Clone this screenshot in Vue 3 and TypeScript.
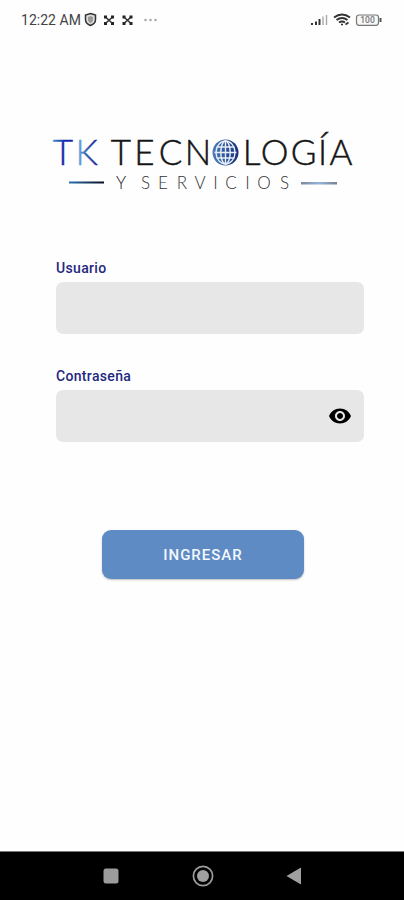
<script setup lang="ts">
import { ref } from 'vue'

const user = ref('')
const password = ref('')
const visible = ref(false)
</script>

<template>
  <main class="screen">
    <header class="status">
      <span class="time">12:22 AM</span>
      <svg class="left-icons" width="80" height="16" viewBox="0 0 80 16">
        <path d="M6.500 1.500 11.500 3V7.500c0 3-2.200 5-5 6C3.700 12.500 1.500 10.500 1.500 7.500V3Z" fill="#ddd" stroke="#333" stroke-width="1.500" />
        <path d="M6.500 4 9 5V7.500c0 1.700-1.200 3-2.500 3.700C5.200 10.500 4 9.200 4 7.500V5Z" fill="#999" />
        <g v-for="x in [20, 38.5]" :key="x" :transform="`translate(${x} 3.500)`" fill="#222">
          <path d="M0 0H3V3H0ZM7 0H10V3H7ZM0 6.500H3V9.500H0ZM7 6.500H10V9.500H7Z" />
          <path d="M2 2 8 7.500M8 2 2 7.500" stroke="#333" stroke-width="1.600" />
        </g>
        <g fill="#aaa"><circle cx="61.500" cy="8" r="1.300" /><circle cx="66.500" cy="8" r="1.300" /><circle cx="71.500" cy="8" r="1.300" /></g>
      </svg>
      <svg class="right-icons" width="76" height="16" viewBox="0 0 76 16">
        <g stroke-width="2" fill="none">
          <path d="M4 11V13M8 9.500V13M11.500 7V13" stroke="#333" />
          <path d="M15 4.500V13M18.500 3V13" stroke="#aaa" stroke-width="1.400" />
        </g>
        <g fill="none" stroke="#333" stroke-width="2">
          <path d="M26 5.500Q34 -.5 42 5.500M28.500 8Q34 4 39.500 8M31 10.500Q34 8.300 37 10.500" />
          <path d="M33 12.500h2M37.500 12.500l3-2" stroke-width="1.700" />
        </g>
        <rect x="48.500" y="3" width="22" height="10.300" rx="2.500" fill="#f7f7f7" stroke="#777" stroke-width="1.200" />
        <path d="M72.500 6v4" stroke="#555" stroke-width="2" />
        <text x="59.500" y="11.200" text-anchor="middle" class="battery">100</text>
      </svg>
    </header>

    <svg class="logo" width="308" height="72" viewBox="50 127 308 72">
      <defs>
        <linearGradient id="letterT" gradientUnits="userSpaceOnUse" x1="53" y1="140" x2="68" y2="148">
          <stop offset="0" stop-color="#3c93d2" /><stop offset=".65" stop-color="#1728aa" />
        </linearGradient>
        <linearGradient id="letterK" gradientUnits="userSpaceOnUse" x1="78" y1="0" x2="96" y2="0">
          <stop offset="0" stop-color="#76b0e2" /><stop offset=".45" stop-color="#3162ad" /><stop offset="1" stop-color="#20289b" />
        </linearGradient>
        <linearGradient id="ruleLeft"><stop offset="0" stop-color="#2a70b4" /><stop offset="1" stop-color="#080b1d" /></linearGradient>
        <linearGradient id="ruleRight"><stop offset="0" stop-color="#7d8998" /><stop offset=".5" stop-color="#94b3dc" /><stop offset="1" stop-color="#79828e" /></linearGradient>
        <linearGradient id="globe"><stop offset="0" stop-color="#4c7cb9" /><stop offset="1" stop-color="#172e75" /></linearGradient>
      </defs>
      <g class="name">
        <text x="63" y="165" fill="url(#letterT)" stroke="url(#letterT)">T</text>
        <text x="86.500" y="165" fill="url(#letterK)" stroke="url(#letterK)">K</text>
        <text x="121 144.500 170.500 198" y="165" fill="#151515" stroke="#151515">TECN</text>
        <text x="251.500 274.500 303.500 322.500 341" y="165" fill="#151515" stroke="#151515">LOGÍA</text>
      </g>
      <circle cx="225.500" cy="152.500" r="13" fill="url(#globe)" />
      <g fill="none" stroke="#e5eef9" stroke-width="1.400">
        <ellipse cx="225.500" cy="152.500" rx="9.500" ry="11.500" />
        <ellipse cx="225.500" cy="152.500" rx="4.700" ry="11.500" />
        <path d="M225.500 141V164M214.500 152.500H236.500M216.500 147H234.500M216.500 158H234.500" />
      </g>
      <path d="M69 181.500h35v2h-35z" fill="url(#ruleLeft)" />
      <path d="M301 182h36v2.500h-36z" fill="url(#ruleRight)" />
      <text class="tagline" x="121 133 145.500 163 182 200 215.500 231 247.500 264 284.500" y="189"><tspan fill="#151515">Y</tspan> SERVICIOS</text>
    </svg>

    <form class="form" @submit.prevent>
      <label class="label" for="user">Usuario</label>
      <div class="field"><input id="user" v-model="user" type="text" autocomplete="off"></div>
      <label class="label second" for="password">Contraseña</label>
      <div class="field">
        <input id="password" v-model="password" :type="visible ? 'text' : 'password'">
        <button class="eye" type="button" aria-label="Contraseña" @click="visible = !visible">
          <svg width="24" height="24" viewBox="0 0 24 24"><path d="M12 4.500C7 4.500 2.730 7.610 1 12c1.730 4.390 6 7.500 11 7.500s9.270-3.110 11-7.500c-1.730-4.390-6-7.500-11-7.500zM12 17c-2.760 0-5-2.240-5-5s2.240-5 5-5 5 2.240 5 5-2.240 5-5 5zm0-8c-1.660 0-3 1.340-3 3s1.340 3 3 3 3-1.340 3-3-1.340-3-3-3z" /></svg>
        </button>
      </div>
      <button class="submit" type="submit">INGRESAR</button>
    </form>

    <nav class="nav">
      <svg width="16" height="16"><rect x=".5" y=".5" width="15" height="15" rx="2.500" fill="#9c9c9c" /></svg>
      <svg width="22" height="22"><circle cx="11" cy="11" r="9.600" fill="none" stroke="#9c9c9c" stroke-width="1.700" /><circle cx="11" cy="11" r="6" fill="#a0a0a0" /></svg>
      <svg width="16" height="18"><path d="M.5 9 15 .5V17.500Z" fill="#a0a0a0" /></svg>
    </nav>
  </main>
</template>

<style>
body { background: #fff; }
</style>

<style scoped>
.screen { display: flex; flex-direction: column; width: 100%; height: 900px; background: #fefefe; font-family: Roboto, "Liberation Sans", sans-serif; }
.status { display: flex; align-items: center; height: 40px; padding: 0 20px 0 21px; box-sizing: border-box; }
.time { width: 62px; font-size: 14px; letter-spacing: .03px; color: #444; white-space: nowrap; }
.left-icons { margin-left: 1px; }
.right-icons { margin-left: auto; }
.battery { font: 500 8.500px Roboto, sans-serif; fill: #777; }
.logo { display: block; margin: 87px 0 0 50px; }
.name { font: 300 35px Lato, sans-serif; text-anchor: middle; stroke-width: .45px; }
.tagline { font: 300 17px Lato, sans-serif; text-anchor: middle; fill: #333; white-space: pre; }
.form { display: flex; flex-direction: column; margin: 60px 40px 0 56px; }
.label { height: 18px; margin-bottom: 5px; font-size: 14px; font-weight: 500; line-height: 18px; letter-spacing: .33px; color: #24277e; }
.second { margin-top: 33px; }
.field { display: flex; align-items: center; height: 52px; border-radius: 7px; background: #e7e7e7; }
.field input { flex: 1; min-width: 0; height: 100%; box-sizing: border-box; padding: 0 14px; border: 0; outline: 0; background: transparent; font: 16px Roboto, sans-serif; }
.eye { display: flex; margin-right: 12px; padding: 0; border: 0; background: none; }
.submit { width: 202px; height: 49px; margin: 88px 0 0 46px; padding: 0; border: 0; border-radius: 9px; background: #5f8bc4; box-shadow: 0 1px 2px #00000040; color: #f4f8ff; font: 500 15px Roboto, sans-serif; letter-spacing: 1px; }
.nav { display: flex; align-items: center; justify-content: space-between; height: 49px; margin-top: auto; padding: 0 102px 0 103px; box-sizing: border-box; border-top: 1px solid #777; background: #000; }
</style>
